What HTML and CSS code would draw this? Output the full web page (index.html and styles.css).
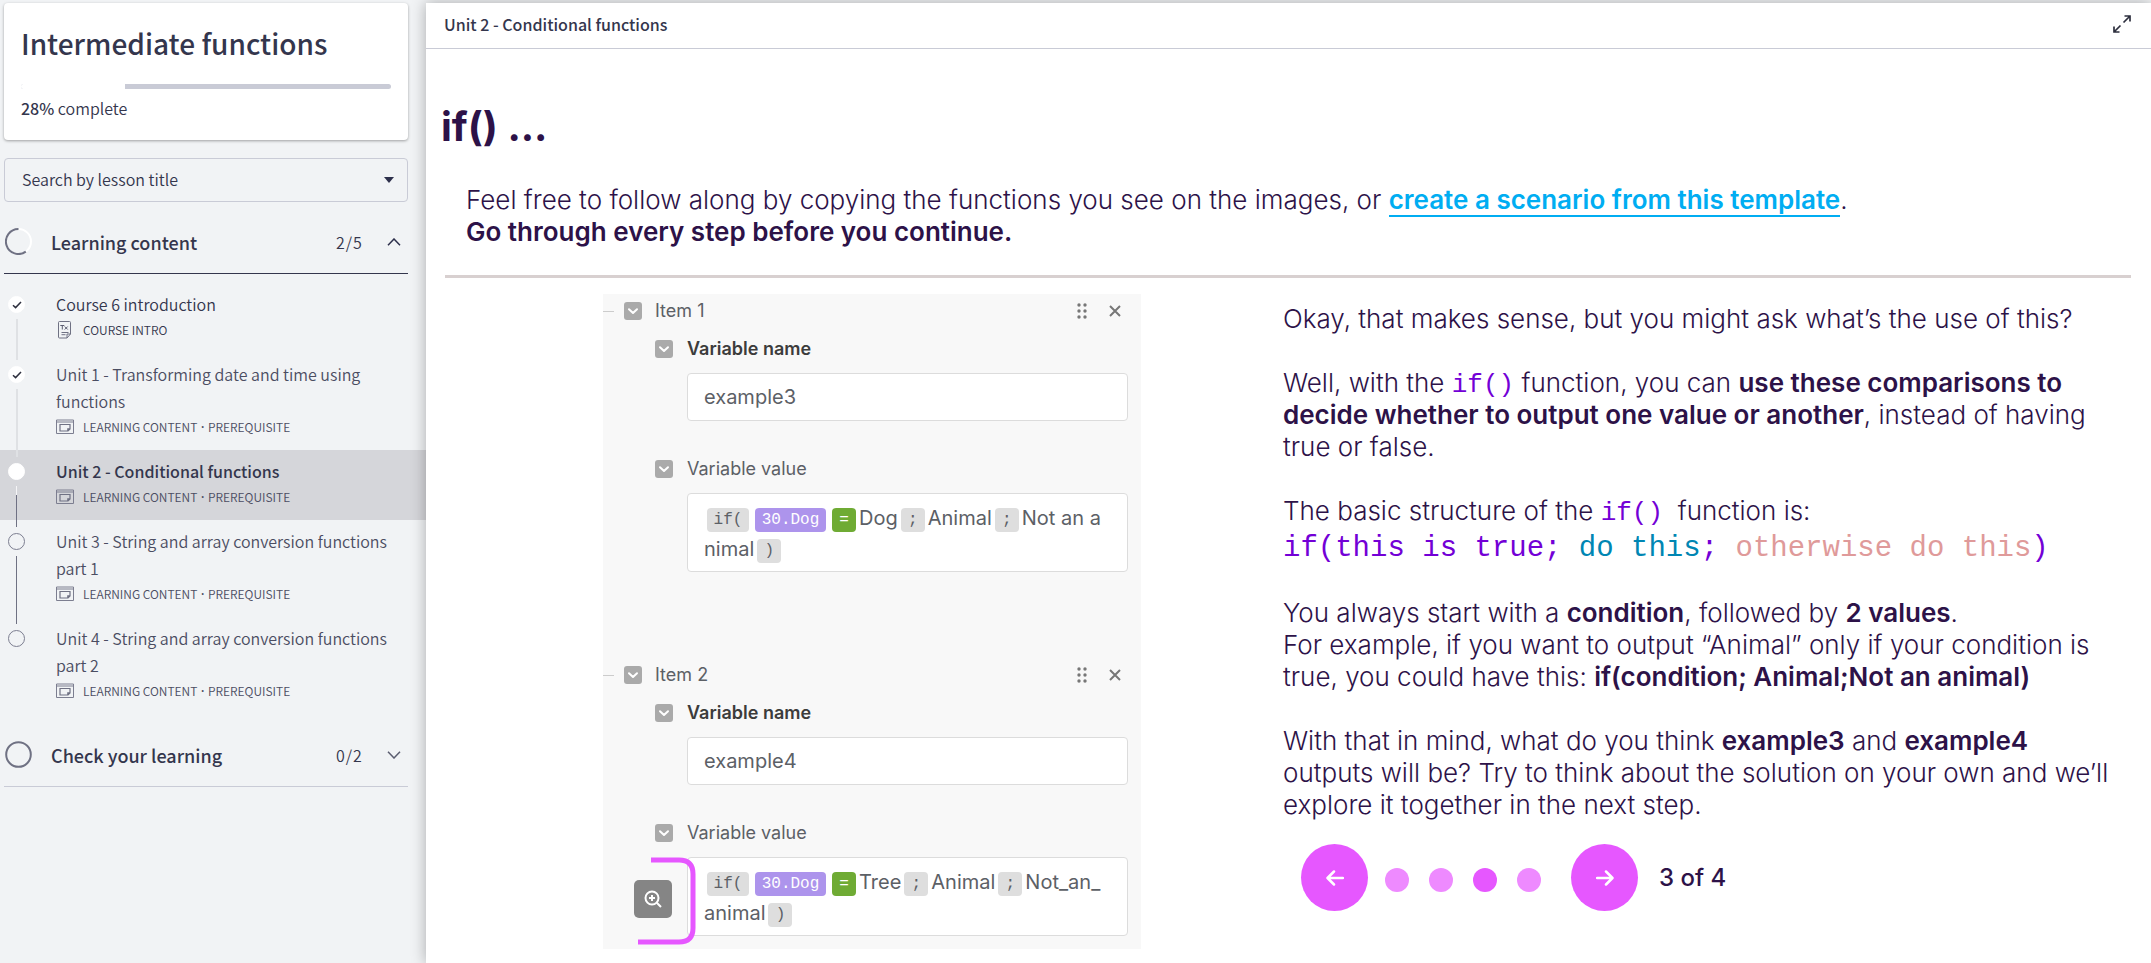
FILE: index.html
```html
<!DOCTYPE html>
<html lang="en">
<head>
<meta charset="utf-8">
<title>Intermediate functions</title>
<link rel="stylesheet" href="styles.css">
</head>
<body>
<svg class="defs" aria-hidden="true">
  <symbol id="i-tick" viewBox="0 0 10 8"><path d="M1 4.2 3.6 6.6 9 1" fill="none" stroke="#2d2f3e" stroke-width="1.5"/></symbol>
  <symbol id="i-doc" viewBox="0 0 18 18"><path d="M3.500.5h10q1 0 1 1v11.500l-3.500 4h-7.500q-1 0-1-1v-14.500q0-1 1-1ZM14.500 13h-3.500v4M5.500 11.500h7M5.500 13.700h4" fill="none" stroke="#6f7183" stroke-width="1"/><path d="M4.300 4.500h4M6.300 4.500v4M8.700 5.500l3 3M11.700 5.500l-3 3" fill="none" stroke="#5b5d70" stroke-width="1"/></symbol>
  <symbol id="i-lesson" viewBox="0 0 18 18"><path d="M.5 2h17v13.500h-17ZM.5 4h17" fill="none" stroke="#7c7e90" stroke-width="1"/><path d="M4 6.500h10v4.500l-2 2H4ZM14 10.800h-2.200v2.200" fill="none" stroke="#6f7183" stroke-width="1.200"/></symbol>
  <symbol id="i-toggle" viewBox="0 0 18 18"><rect width="18" height="18" rx="3" fill="#aaa"/><path d="M5 7.200 9 11l4-3.800" fill="none" stroke="#fff" stroke-width="2" stroke-linecap="round" stroke-linejoin="round"/></symbol>
  <symbol id="i-grip" viewBox="0 0 10 16"><g fill="#777"><circle cx="2" cy="2" r="1.700"/><circle cx="8" cy="2" r="1.700"/><circle cx="2" cy="8" r="1.700"/><circle cx="8" cy="8" r="1.700"/><circle cx="2" cy="14" r="1.700"/><circle cx="8" cy="14" r="1.700"/></g></symbol>
  <symbol id="i-close" viewBox="0 0 12 12"><path d="M1 1l10 10M11 1 1 11" stroke="#777" stroke-width="2"/></symbol>
</svg>
<div class="app">
  <aside class="sidebar">
    <header class="course">
      <h1 class="course-title">Intermediate functions</h1>
      <div class="progress" role="progressbar" aria-label="Course progress" aria-valuenow="28"><div class="progress-fill" style="width:28%"></div></div>
      <p class="course-status"><strong>28%</strong> complete</p>
    </header>
    <div class="search">
      <select class="search-select" aria-label="Search by lesson title"><option>Search by lesson title</option></select>
      <svg class="search-caret" viewBox="0 0 10 6"><path d="M0 0h10L5 6Z" fill="#2d2f4b"/></svg>
    </div>
    <button class="section section-open" type="button">
      <svg class="section-ring" viewBox="0 0 27 27"><circle cx="13.500" cy="13.500" r="12.500" fill="none" stroke="#fff" stroke-width="2"/><path d="M13.500 1a12.500 12.500 0 1 0 7.300 22.600" fill="none" stroke="#6f7183" stroke-width="2"/></svg>
      <span class="section-name">Learning content</span>
      <span class="section-count">2/5</span>
      <svg class="section-arrow" viewBox="0 0 14 8"><path d="M1 7.200 7 1l6 6.200" fill="none" stroke="#2d2f4b" stroke-width="1.500"/></svg>
    </button>
    <ol class="lessons">
      <li class="lesson">
        <span class="rail"><span class="dot dot-done"><svg class="tick"><use href="#i-tick"/></svg></span><span class="link link-done"></span></span>
        <div class="lesson-text"><a class="lesson-title strong-ink" href="#">Course 6 introduction</a><p class="meta strong-ink"><svg class="meta-icon"><use href="#i-doc"/></svg>COURSE INTRO</p></div>
      </li>
      <li class="lesson">
        <span class="rail"><span class="dot dot-done"><svg class="tick"><use href="#i-tick"/></svg></span><span class="link link-done"></span></span>
        <div class="lesson-text"><a class="lesson-title" href="#">Unit 1 - Transforming date and time using functions</a><p class="meta"><svg class="meta-icon"><use href="#i-lesson"/></svg><span>LEARNING CONTENT <span class="sep">·</span> PREREQUISITE</span></p></div>
      </li>
      <li class="lesson lesson-active">
        <span class="rail"><span class="dot dot-done"></span><span class="link link-half"></span></span>
        <div class="lesson-text"><a class="lesson-title" href="#" aria-current="page">Unit 2 - Conditional functions</a><p class="meta"><svg class="meta-icon"><use href="#i-lesson"/></svg><span>LEARNING CONTENT <span class="sep">·</span> PREREQUISITE</span></p></div>
      </li>
      <li class="lesson">
        <span class="rail"><span class="dot"></span><span class="link"></span></span>
        <div class="lesson-text"><a class="lesson-title" href="#">Unit 3 - String and array conversion functions part 1</a><p class="meta"><svg class="meta-icon"><use href="#i-lesson"/></svg><span>LEARNING CONTENT <span class="sep">·</span> PREREQUISITE</span></p></div>
      </li>
      <li class="lesson">
        <span class="rail"><span class="dot"></span></span>
        <div class="lesson-text"><a class="lesson-title" href="#">Unit 4 - String and array conversion functions part 2</a><p class="meta"><svg class="meta-icon"><use href="#i-lesson"/></svg><span>LEARNING CONTENT <span class="sep">·</span> PREREQUISITE</span></p></div>
      </li>
    </ol>
    <button class="section" type="button">
      <svg class="section-ring" viewBox="0 0 27 27"><circle cx="13.500" cy="13.500" r="12.300" fill="none" stroke="#6f7183" stroke-width="2"/></svg>
      <span class="section-name">Check your learning</span>
      <span class="section-count">0/2</span>
      <svg class="section-arrow" viewBox="0 0 14 8"><path d="M1 .8 7 7l6-6.200" fill="none" stroke="#5b5d70" stroke-width="1.500"/></svg>
    </button>
  </aside>
  <main class="main">
    <header class="topbar">
      <span>Unit 2 - Conditional functions</span>
      <button class="expand" type="button" aria-label="Full screen"><svg class="expand-icon" viewBox="0 0 18 18"><path d="M10.500 7.500 16.500 1.500M11.500 1h5.500v5.500M7.500 10.500 1.500 16.500M1 11.500v5.500h5.500" fill="none" stroke="#2d2f3e" stroke-width="1.700"/></svg></button>
    </header>
    <article class="content">
      <h2 class="title">if() ...</h2>
      <p class="intro">Feel free to follow along by copying the functions you see on the images, or <a class="template" href="#">create a scenario from this template</a>.<br><b>Go through every step before you continue.</b></p>
      <hr class="rule">
      <div class="columns">
        <figure class="panel">
          <section class="item">
            <header class="item-head"><span class="stub"></span><svg class="toggle"><use href="#i-toggle"/></svg><span>Item 1</span><svg class="grip"><use href="#i-grip"/></svg><svg class="close"><use href="#i-close"/></svg></header>
            <div class="field">
              <svg class="toggle"><use href="#i-toggle"/></svg><label class="label label-bold" for="name1">Variable name</label>
              <input class="box" id="name1" value="example3">
            </div>
            <div class="field">
              <svg class="toggle"><use href="#i-toggle"/></svg><span class="label">Variable value</span>
              <div class="box formula"><code class="tag tag-first">if(</code><code class="tag tag-var">30.Dog</code><code class="tag tag-op">=</code>Dog<code class="tag">;</code>Animal<code class="tag">;</code>Not an a<br>nimal<code class="tag">)</code></div>
            </div>
          </section>
          <section class="item">
            <header class="item-head"><span class="stub"></span><svg class="toggle"><use href="#i-toggle"/></svg><span>Item 2</span><svg class="grip"><use href="#i-grip"/></svg><svg class="close"><use href="#i-close"/></svg></header>
            <div class="field">
              <svg class="toggle"><use href="#i-toggle"/></svg><label class="label label-bold" for="name2">Variable name</label>
              <input class="box" id="name2" value="example4">
            </div>
            <div class="field">
              <svg class="toggle"><use href="#i-toggle"/></svg><span class="label">Variable value</span>
              <div class="box formula"><code class="tag tag-first">if(</code><code class="tag tag-var">30.Dog</code><code class="tag tag-op">=</code>Tree<code class="tag">;</code>Animal<code class="tag">;</code>Not_an_<br>animal<code class="tag">)</code></div>
            </div>
          </section>
          <svg class="bracket" viewBox="0 0 60 90"><path d="M14 4h28q14 0 14 14v54q0 14-14 14H1" fill="none" stroke="#e657ff" stroke-width="5"/></svg>
          <button class="zoom" type="button" aria-label="Zoom in"><svg class="zoom-icon" viewBox="0 0 18 18"><circle cx="8" cy="8" r="6.500" fill="none" stroke="#fff" stroke-width="2"/><path d="M8 5v6M5 8h6M12.800 12.800 17 17" stroke="#fff" stroke-width="2"/></svg></button>
        </figure>
        <div class="lecture">
          <p>Okay, that makes sense, but you might ask what’s the use of this?</p>
          <p>Well, with the <code class="fn">if()</code> function, you can <b>use these comparisons to decide whether to output one value or another</b>, instead of having true or false.</p>
          <p>The basic structure of the <code class="fn">if()</code>&nbsp; function is:<br><code class="syntax">if(this is true; <span class="then">do this</span>; <span class="else">otherwise do this</span>)</code></p>
          <p>You always start with a <b>condition</b>, followed by <b>2 values</b>.<br>For example, if you want to output “Animal” only if your condition is true, you could have this: <b>if(condition; Animal;Not an animal)</b></p>
          <p>With that in mind, what do you think <b>example3</b> and <b>example4</b> outputs will be? Try to think about the solution on your own and we’ll explore it together in the next step.</p>
          <nav class="pager" aria-label="Steps">
            <button class="arrow" type="button" aria-label="Previous"><svg class="arrow-icon" viewBox="0 0 18 16"><path d="M17 8H2M8 1.500 1.500 8 8 14.500" fill="none" stroke="#fff" stroke-width="2.500" stroke-linecap="round" stroke-linejoin="round"/></svg></button>
            <span class="steps">
              <button class="step" type="button" aria-label="Step 1"></button>
              <button class="step" type="button" aria-label="Step 2"></button>
              <button class="step step-on" type="button" aria-label="Step 3"></button>
              <button class="step" type="button" aria-label="Step 4"></button>
            </span>
            <button class="arrow" type="button" aria-label="Next"><svg class="arrow-icon" viewBox="0 0 18 16"><path d="M1 8h15M10 1.500 16.500 8 10 14.500" fill="none" stroke="#fff" stroke-width="2.500" stroke-linecap="round" stroke-linejoin="round"/></svg></button>
            <span class="count">3 of 4</span>
          </nav>
        </div>
      </div>
    </article>
  </main>
</div>
</body>
</html>
```
FILE: styles.css
```css
* { box-sizing: border-box; }
body, h1, h2, p, ol, figure { margin: 0; padding: 0; }
body {
  font-family: "Noto Sans CJK SC", "Noto Sans", sans-serif;
  color: #34364d;
  background: #f1f3f5;
}
button { font: inherit; color: inherit; background: none; border: 0; padding: 0; }
.defs { display: none; }
.app { display: flex; min-height: 100vh; padding-top: 3px; }

/* Sidebar */
.sidebar { width: 426px; flex: none; }
.course {
  margin: 0 18px 18px 4px;
  padding: 20px 17px 19px;
  background: #fff;
  border-radius: 4px;
  box-shadow: 0 1px 3px rgba(0, 0, 0, .35);
}
.course-title { font-size: 28px; line-height: 40px; font-weight: 500; }
.progress { height: 5px; margin: 21px 0 7px; border-radius: 3px; background: #c9cbd6; overflow: hidden; }
.progress-fill { height: 100%; background: #fff; }
.course-status { font-size: 16px; line-height: 25px; font-weight: 350; }
.course-status strong { font-weight: 500; }
.search { position: relative; margin: 0 18px 0 4px; }
.search-select {
  display: block;
  width: 100%;
  height: 44px;
  padding: 0 17px 2px;
  border: 1px solid #c9cbd6;
  border-radius: 4px;
  background: transparent;
  appearance: none;
  font: inherit;
  font-size: 16px;
  font-weight: 350;
  color: inherit;
}
.search-caret { position: absolute; right: 14px; top: 19px; width: 10px; height: 6px; }
.section {
  display: flex;
  align-items: center;
  width: 404px;
  height: 64px;
  margin: 0 0 0 4px;
  padding: 0 7px 0 1px;
  border-bottom: 1px solid #c9cbd6;
  text-align: left;
}
.section-open { height: 72px; padding-top: 8px; border-color: #34364d; }
.section-ring { width: 27px; height: 27px; margin-right: 19px; }
.section-name { flex: 1; font-size: 18px; font-weight: 500; }
.section-count { width: 51px; font-size: 16px; font-weight: 350; letter-spacing: 1px; }
.section-arrow { width: 14px; height: 8px; }
.lessons { list-style: none; padding: 9px 0; }
.lesson { display: flex; padding: 8px 16px 11px 8px; font-weight: 350; color: #4b4d62; }
.rail { position: relative; width: 48px; flex: none; }
.dot {
  display: flex;
  align-items: center;
  justify-content: center;
  width: 17px;
  height: 17px;
  margin-top: 5px;
  border: 1px solid #7c7e90;
  border-radius: 50%;
}
.dot-done { border-color: #fff; background: #fff; }
.tick { width: 10px; height: 8px; }
.link { position: absolute; left: 8px; top: 28px; bottom: -18px; width: 1px; background: #6f7183; }
.link-done { width: 2px; background: #dfe1e4; }
.link-half { background: linear-gradient(#f5f5f7 9px, #6f7183 9px); }
.lesson-title { display: block; font-size: 16px; line-height: 27px; color: inherit; text-decoration: none; }
.strong-ink { color: #34364d; }
.meta { display: flex; align-items: center; gap: 9px; height: 24px; font-size: 12px; line-height: 24px; }
.meta-icon { width: 18px; height: 18px; }
.sep { margin: 0 1px; font-family: "Noto Sans", sans-serif; line-height: 12px; font-weight: 600; }
.lesson-active { background: #d5d6da; }
.lesson-active .lesson-title { font-weight: 500; color: #34364d; }

/* Main area */
.main { flex: 1; min-width: 0; background: #fff; box-shadow: 0 0 14px rgba(0, 0, 0, .3); }
.topbar {
  display: flex;
  align-items: center;
  justify-content: space-between;
  height: 46px;
  padding: 0 20px 3px 18px;
  border-bottom: 1px solid #c9cbd6;
  font-size: 16px;
  font-weight: 500;
}
.expand, .expand-icon { display: block; width: 18px; height: 18px; }
.content { padding: 50px 20px 14px 19px; font-family: Inter, sans-serif; color: #2d1248; }
.title { font-size: 40px; line-height: 56px; font-weight: 700; margin-left: -4px; }
.intro { margin: 29px 0 0 21px; font-size: 26px; line-height: 32px; font-weight: 300; }
b { font-weight: 600; }
.template { color: #00adf2; font-weight: 600; text-decoration: none; border-bottom: 2px solid #00adf2; }
.rule { height: 3px; margin: 27px 0 16px; border: 0; background: #d8d0d0; }
.columns { display: grid; grid-template-columns: 838fr 848fr; align-items: start; }

/* Mapping panel */
.panel {
  position: relative;
  width: 538px;
  margin: 0 142px 0 auto;
  padding: 8px 13px 13px 0;
  background: #f8f8f8;
  color: #5c6066;
  font-size: 18px;
}
.item + .item { margin-top: 94px; }
.item-head { display: flex; align-items: center; height: 18px; padding-right: 7px; line-height: 18px; }
.stub { width: 11px; height: 1px; margin-right: 10px; background: #ccc; }
.toggle { width: 18px; height: 18px; flex: none; }
.item-head .toggle { margin-right: 13px; }
.grip { width: 10px; height: 16px; margin-left: auto; }
.close { width: 12px; height: 12px; margin-left: 22px; }
.field {
  display: grid;
  grid-template-columns: 18px 1fr;
  gap: 15px 14px;
  align-items: center;
  margin: 20px 0 0 52px;
}
.field + .field { margin-top: 39px; }
.label { line-height: 18px; }
.label-bold { font-weight: 600; color: #3c3c3c; }
.box {
  grid-column: 2;
  width: 100%;
  height: 48px;
  padding: 0 16px;
  border: 1px solid #dcdcdc;
  border-radius: 4px;
  background: #fff;
  font: inherit;
  font-size: 20px;
  color: #5c6066;
}
.formula { height: 79px; padding-top: 9px; line-height: 31px; white-space: nowrap; }
.tag {
  display: inline-block;
  min-width: 24px;
  height: 24px;
  margin: 0 3px;
  border-radius: 4px;
  background: #dedede;
  font: 16px/24px "Liberation Mono", monospace;
  text-align: center;
  vertical-align: 1px;
}
.tag-first { width: 42px; }
.tag-var { width: 71px; background: #ad94ec; color: #fff; }
.tag-op { background: #6fab34; color: #fff; }
.bracket { position: absolute; left: 34px; bottom: 3px; width: 60px; height: 90px; }
.zoom {
  position: absolute;
  left: 31px;
  bottom: 31px;
  display: flex;
  align-items: center;
  justify-content: center;
  width: 38px;
  height: 38px;
  border-radius: 5px;
  background: #858585;
}
.zoom-icon { width: 18px; height: 18px; }

/* Lecture column */
.lecture { padding: 9px 10px 0 0; font-size: 26px; line-height: 32px; font-weight: 300; }
.lecture p { margin-bottom: 32px; }
.fn, .syntax { font-family: "Liberation Mono", monospace; color: #7300d6; font-weight: 400; }
.fn { font-size: 26px; line-height: 26px; }
.syntax { display: block; padding-top: 6px; font-size: 29px; line-height: 32px; white-space: nowrap; }
.then { color: #0086b3; }
.else { color: #df9a9a; }
.pager { display: flex; align-items: center; margin-top: -9px; padding-left: 18px; }
.arrow {
  display: flex;
  align-items: center;
  justify-content: center;
  width: 67px;
  height: 67px;
  border-radius: 50%;
  background: #e657ff;
}
.arrow-icon { width: 18px; height: 16px; }
.steps { display: flex; gap: 20px; margin: 4px 30px 0 17px; }
.step { width: 24px; height: 24px; border-radius: 50%; background: #ee8aff; }
.step-on { background: #e657ff; }
.count { margin-left: 21px; font-size: 24px; font-weight: 500; }
```
